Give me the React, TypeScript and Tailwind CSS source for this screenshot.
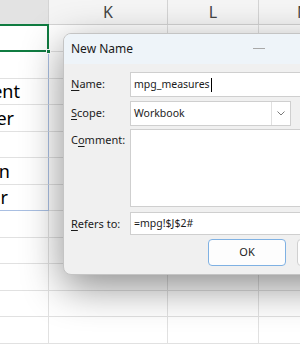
import React from 'react';

const uiFont = { fontFamily: '"Noto Sans", "Open Sans", sans-serif' };

// row heights below the header, alternating to land lines near 26.5px pitch
const rowHeights = [27, 27, 26, 27, 26, 27, 26, 27, 26, 27, 26, 27];

// tail of text spilling from column I into view (right edge padding)
const cellText: Record<number, { text: string; pr: string }> = {
  2: { text: 'Segment', pr: 'pr-[28px]' },
  3: { text: 'Number', pr: 'pr-[34px]' },
  5: { text: 'Region', pr: 'pr-[38px]' },
  6: { text: 'Year', pr: 'pr-[40px]' },
};

const SheetRow: React.FC<{ index: number; height: number }> = ({ index, height }) => {
  const inTable = index >= 1 && index <= 6;
  const t = cellText[index];
  return (
    <div className="flex" style={{ height }}>
      <div
        className={`w-[49px] shrink-0 border-r overflow-hidden flex items-center justify-end whitespace-nowrap text-[18px] text-black ${
          inTable ? 'border-[#a9bfe2]' : 'border-[#e1e1e1]'
        } ${index === 6 ? 'border-b border-b-[#a9bfe2]' : 'border-b border-b-[#e1e1e1]'} ${t ? t.pr : ''}`}
      >
        {t ? t.text : ''}
      </div>
      <div className="w-[119px] shrink-0 border-r border-b border-[#e1e1e1]" />
      <div className="w-[91px] shrink-0 border-r border-b border-[#e1e1e1]" />
      <div className="flex-1 border-b border-[#e1e1e1]" />
    </div>
  );
};

const Label: React.FC<{ ul: string; before?: string; after: string }> = ({ ul, before = '', after }) => (
  <span className="text-[11px] text-[#1b1b1b] leading-none">
    {before}
    <u className="underline underline-offset-2">{ul}</u>
    {after}
  </span>
);

export default function App() {
  return (
    <div className="relative w-[300px] h-[350px] overflow-hidden bg-white" style={uiFont}>
      {/* column headers */}
      <div className="flex h-[25px] border-b border-[#d4d4d4] text-[16px] text-[#444]">
        <div className="w-[49px] shrink-0 bg-[#e3e3e3] border-r border-[#d4d4d4]" />
        <div className="w-[119px] shrink-0 bg-[#f5f5f5] border-r border-[#d4d4d4] flex items-center justify-center">K</div>
        <div className="w-[91px] shrink-0 bg-[#f5f5f5] border-r border-[#d4d4d4] flex items-center justify-center">L</div>
        <div className="flex-1 bg-[#f5f5f5] flex items-center pl-[38px] overflow-hidden">M</div>
      </div>

      {rowHeights.map((h, i) => (
        <SheetRow key={i} index={i} height={h} />
      ))}

      {/* active cell */}
      <div className="absolute left-[-2px] top-[24px] w-[51px] h-[28px] border-2 border-[#107c41]" />
      <div className="absolute left-[46px] top-[49px] w-[5px] h-[5px] bg-[#107c41] border border-white" />

      {/* New Name dialog */}
      <div className="absolute left-[63px] top-[33px] w-[380px] h-[242px] rounded-lg border border-[#c4c4c4] bg-[#f0f0f0] overflow-hidden shadow-[0_12px_40px_rgba(0,0,0,0.45)] flex flex-col">
        <div className="h-[30px] shrink-0 bg-[#eef4f9] flex items-center pl-[7px] relative">
          <span className="text-[12px] text-[#1a1a1a]">New Name</span>
          <div className="absolute left-[189px] top-[14px] w-[12px] h-[1px] bg-[#a8a8a8]" />
        </div>

        <div className="flex flex-col pl-[7px] pt-[8px]">
          <div className="flex items-center h-[25px]">
            <div className="w-[59px] shrink-0 leading-none pb-[5px]">
              <Label ul="N" after="ame:" />
            </div>
            <div className="w-[320px] h-[25px] bg-white border border-[#cfcfcf] flex items-center pl-[3px] text-[10.5px] text-[#1b1b1b]">
              mpg_measures<span className="inline-block w-px h-[14px] bg-black ml-[1px]" />
            </div>
          </div>

          <div className="flex items-center h-[25px] mt-[4px]">
            <div className="w-[59px] shrink-0 leading-none pb-[5px]">
              <Label ul="S" after="cope:" />
            </div>
            <div className="w-[161px] h-[25px] bg-white border border-[#cfcfcf] flex items-center text-[10.5px] text-[#1b1b1b]">
              <span className="flex-1 pl-[3px]">Workbook</span>
              <div className="w-[19px] h-full border-l border-[#e0e0e0] flex items-center justify-center">
                <svg width="8" height="5" viewBox="0 0 8 5" fill="none">
                  <path d="M0.5 0.5 L4 4 L7.5 0.5" stroke="#7a7a7a" strokeWidth="1" />
                </svg>
              </div>
            </div>
          </div>

          <div className="flex items-start mt-[3px]">
            <div className="w-[59px] shrink-0 leading-none pt-[1px]">
              <Label before="C" ul="o" after="mment:" />
            </div>
            <div className="w-[320px] h-[78px] bg-white border border-[#cfcfcf]" />
          </div>

          <div className="flex items-center h-[23px] mt-[5px]">
            <div className="w-[59px] shrink-0 leading-none pb-[4px]">
              <Label ul="R" after="efers to:" />
            </div>
            <div className="w-[320px] h-[23px] bg-white border border-[#cfcfcf] flex items-center pl-[3px] text-[10.5px] text-[#1b1b1b]">
              =mpg!$J$2#
            </div>
          </div>

          <div className="flex h-[27px] mt-[4px] pl-[137px] gap-[11px]">
            <div className="w-[78px] h-[27px] rounded-[4px] border border-[#7fb1e3] bg-[#fdfdfd] flex items-center justify-center text-[11px] text-[#1b1b1b]">
              OK
            </div>
            <div className="w-[78px] h-[27px] rounded-[4px] border border-[#d0d0d0] bg-[#fdfdfd] flex items-center justify-center text-[11px] text-[#1b1b1b]">
              Cancel
            </div>
          </div>
        </div>
      </div>
    </div>
  );
}
